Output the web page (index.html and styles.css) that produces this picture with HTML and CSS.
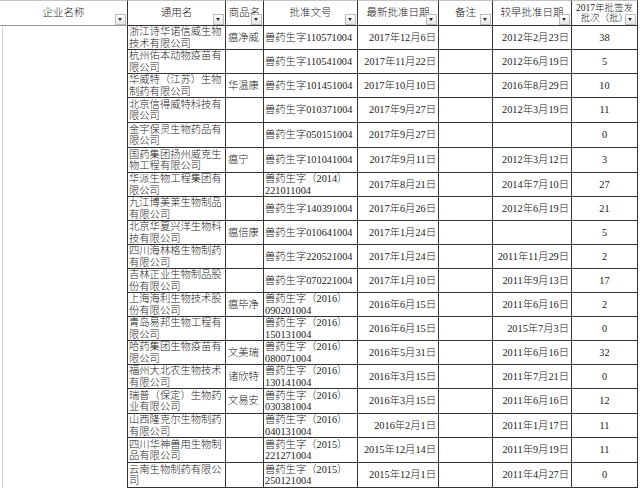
FILE: index.html
```html
<!DOCTYPE html>
<html lang="zh-CN">
<head>
<meta charset="utf-8">
<title>兽药批准</title>
<link rel="stylesheet" href="styles.css">
</head>
<body>
<div class="sheet">
  <div class="c hd hd-first">企业名称<span class="dd"></span></div>
  <div class="c hd">通用名<span class="dd"></span></div>
  <div class="c hd">商品名<span class="dd"></span></div>
  <div class="c hd">批准文号<span class="dd"></span></div>
  <div class="c hd">最新批准日期<span class="dd"></span></div>
  <div class="c hd">备注<span class="dd"></span></div>
  <div class="c hd">较早批准日期<span class="dd"></span></div>
  <div class="c hd hd-small">2017年批签发<br>批次（批）<span class="dd"></span></div>

  <div class="c e"></div><div class="c co">浙江诗华诺信威生物技术有限公司</div><div class="c tn">瘟净威</div><div class="c ap">兽药生字110571004</div><div class="c d1">2017年12月6日</div><div class="c nt"></div><div class="c d2">2012年2月23日</div><div class="c n">38</div>
  <div class="c e"></div><div class="c co">杭州佑本动物疫苗有限公司</div><div class="c tn"></div><div class="c ap">兽药生字110541004</div><div class="c d1">2017年11月22日</div><div class="c nt"></div><div class="c d2">2012年6月19日</div><div class="c n">5</div>
  <div class="c e"></div><div class="c co">华威特（江苏）生物制药有限公司</div><div class="c tn">华温康</div><div class="c ap">兽药生字101451004</div><div class="c d1">2017年10月10日</div><div class="c nt"></div><div class="c d2">2016年8月29日</div><div class="c n">10</div>
  <div class="c e"></div><div class="c co">北京信得威特科技有限公司</div><div class="c tn"></div><div class="c ap">兽药生字010371004</div><div class="c d1">2017年9月27日</div><div class="c nt"></div><div class="c d2">2012年3月19日</div><div class="c n">11</div>
  <div class="c e"></div><div class="c co">金宇保灵生物药品有限公司</div><div class="c tn"></div><div class="c ap">兽药生字050151004</div><div class="c d1">2017年9月27日</div><div class="c nt"></div><div class="c d2"></div><div class="c n">0</div>
  <div class="c e"></div><div class="c co">国药集团扬州威克生物工程有限公司</div><div class="c tn">瘟宁</div><div class="c ap">兽药生字101041004</div><div class="c d1">2017年9月11日</div><div class="c nt"></div><div class="c d2">2012年3月12日</div><div class="c n">3</div>
  <div class="c e"></div><div class="c co">华派生物工程集团有限公司</div><div class="c tn"></div><div class="c ap">兽药生字（2014）<br>221011004</div><div class="c d1">2017年8月21日</div><div class="c nt"></div><div class="c d2">2014年7月10日</div><div class="c n">27</div>
  <div class="c e"></div><div class="c co">九江博美莱生物制品有限公司</div><div class="c tn"></div><div class="c ap">兽药生字140391004</div><div class="c d1">2017年6月26日</div><div class="c nt"></div><div class="c d2">2012年6月19日</div><div class="c n">21</div>
  <div class="c e"></div><div class="c co">北京华夏兴洋生物科技有限公司</div><div class="c tn">瘟倍康</div><div class="c ap">兽药生字010641004</div><div class="c d1">2017年1月24日</div><div class="c nt"></div><div class="c d2"></div><div class="c n">5</div>
  <div class="c e"></div><div class="c co">四川海林格生物制药有限公司</div><div class="c tn"></div><div class="c ap">兽药生字220521004</div><div class="c d1">2017年1月24日</div><div class="c nt"></div><div class="c d2">2011年11月29日</div><div class="c n">2</div>
  <div class="c e"></div><div class="c co">吉林正业生物制品股份有限公司</div><div class="c tn"></div><div class="c ap">兽药生字070221004</div><div class="c d1">2017年1月10日</div><div class="c nt"></div><div class="c d2">2011年9月13日</div><div class="c n">17</div>
  <div class="c e"></div><div class="c co">上海海利生物技术股份有限公司</div><div class="c tn">瘟毕净</div><div class="c ap">兽药生字（2016）<br>090201004</div><div class="c d1">2016年6月15日</div><div class="c nt"></div><div class="c d2">2011年6月16日</div><div class="c n">2</div>
  <div class="c e"></div><div class="c co">青岛易邦生物工程有限公司</div><div class="c tn"></div><div class="c ap">兽药生字（2016）<br>150131004</div><div class="c d1">2016年6月15日</div><div class="c nt"></div><div class="c d2">2015年7月3日</div><div class="c n">0</div>
  <div class="c e"></div><div class="c co">哈药集团生物疫苗有限公司</div><div class="c tn">文美瑞</div><div class="c ap">兽药生字（2016）<br>080071004</div><div class="c d1">2016年5月31日</div><div class="c nt"></div><div class="c d2">2011年6月16日</div><div class="c n">32</div>
  <div class="c e"></div><div class="c co">福州大北农生物技术有限公司</div><div class="c tn">诸欣特</div><div class="c ap">兽药生字（2016）<br>130141004</div><div class="c d1">2016年3月15日</div><div class="c nt"></div><div class="c d2">2011年7月21日</div><div class="c n">0</div>
  <div class="c e"></div><div class="c co">瑞普（保定）生物药业有限公司</div><div class="c tn">文易安</div><div class="c ap">兽药生字（2016）<br>030381004</div><div class="c d1">2016年3月15日</div><div class="c nt"></div><div class="c d2">2011年6月16日</div><div class="c n">12</div>
  <div class="c e"></div><div class="c co">山西隆克尔生物制药有限公司</div><div class="c tn"></div><div class="c ap">兽药生字（2016）<br>040131004</div><div class="c d1">2016年2月1日</div><div class="c nt"></div><div class="c d2">2011年1月17日</div><div class="c n">11</div>
  <div class="c e"></div><div class="c co">四川华神兽用生物制品有限公司</div><div class="c tn"></div><div class="c ap">兽药生字（2015）<br>221271004</div><div class="c d1">2015年12月14日</div><div class="c nt"></div><div class="c d2">2011年9月19日</div><div class="c n">11</div>
  <div class="c e"></div><div class="c co">云南生物制药有限公司</div><div class="c tn"></div><div class="c ap">兽药生字（2015）<br>250121004</div><div class="c d1">2015年12月1日</div><div class="c nt"></div><div class="c d2">2011年4月27日</div><div class="c n">0</div>
  <div class="c e"></div><div class="c co"></div><div class="c tn"></div><div class="c ap"></div><div class="c d1"></div><div class="c nt"></div><div class="c d2"></div><div class="c n"></div>
</div>
</body>
</html>
```

FILE: styles.css
```css
* {
  box-sizing: border-box;
  margin: 0;
  padding: 0;
}

html,
body {
  background: #ffffff;
}

body {
  margin: 0;
  overflow: hidden;
  font-family: "Liberation Serif", "Noto Sans CJK SC", serif;
  font-size: 10.3px;
  font-weight: 300;
  color: #1a1a1a;
}

.sheet {
  display: grid;
  width: 638px;
  grid-template-columns: 128px 98px 38px 94px 81px 54px 79px 66px;
  grid-template-rows: 26px 24px 24px 24px 25px 25px 25px 24px 24px 24px 24px 24px 24px 24px 24px 24px 25px 24px 25px 25px 24px;
}

.c {
  display: flex;
  align-items: center;
  border-right: 1px solid #333333;
  border-bottom: 1px solid #333333;
  line-height: 11.5px;
  white-space: nowrap;
  overflow: hidden;
}

.hd {
  position: relative;
  justify-content: center;
  text-align: center;
  border-top: 1px solid #c4c4c4;
  font-size: 10.5px;
}

.hd-first {
  border-bottom-color: #9a9a9a;
}

.hd-small {
  font-size: 9.5px;
  line-height: 10.5px;
}

.dd {
  position: absolute;
  right: 1px;
  bottom: 0;
  width: 11px;
  height: 11px;
  border: 1px solid #bdbdbd;
  background: linear-gradient(#ffffff, #e4e4e4);
}

.dd::after {
  content: "";
  position: absolute;
  left: 2px;
  top: 3px;
  border-left: 2.5px solid transparent;
  border-right: 2.5px solid transparent;
  border-top: 3px solid #333333;
}

.e {
  margin-left: 2px;
  border-left: 1px solid #d2d2d2;
  border-bottom: none;
}

.co {
  padding-left: 1px;
  white-space: normal;
}

.tn {
  padding-left: 2px;
}

.ap {
  padding-left: 1px;
}

.d1 {
  justify-content: flex-end;
  padding-right: 2px;
}

.d2 {
  justify-content: flex-end;
  padding-right: 2px;
}

.n {
  justify-content: center;
}
```
